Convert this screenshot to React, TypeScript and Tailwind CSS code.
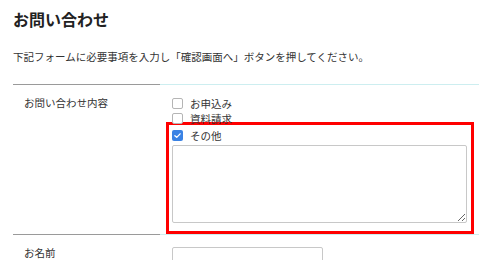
import React from 'react';

function Box({ checked }: { checked?: boolean }) {
  if (checked) {
    return (
      <span className="flex h-[11px] w-[11px] items-center justify-center rounded-[2px] bg-[#3a82e4]">
        <svg viewBox="0 0 12 12" className="h-[9px] w-[9px]">
          <path d="M2.5 6.2 5 8.5 9.5 3.8" fill="none" stroke="#fff" strokeWidth="1.8" strokeLinecap="round" strokeLinejoin="round" />
        </svg>
      </span>
    );
  }
  return <span className="block h-[11px] w-[11px] rounded-[2px] border border-[#b5b5b5] bg-white" />;
}

function Item({ label, checked }: { label: string; checked?: boolean }) {
  return (
    <label className="flex h-[15px] items-center gap-[7px] text-[10.5px] leading-[15px] text-[#333]">
      <Box checked={checked} />
      <span>{label}</span>
    </label>
  );
}

export default function App() {
  return (
    <div className="h-[260px] w-[492px] overflow-hidden bg-white px-[13px] font-['Noto_Sans_CJK_JP','Noto_Sans',sans-serif] text-[#333]">
      <h1 className="pt-[8px] text-[16px] font-bold leading-[22px] text-[#222]">お問い合わせ</h1>
      <p className="mt-[19px] text-[10.5px] leading-[16px]">
        下記フォームに必要事項を入力し「確認画面へ」ボタンを押してください。
      </p>

      <div className="mt-[19px] w-[466px]">
        <div className="flex">
          <div className="w-[147px] border-t border-[#9a9a9a] pl-[11px] pt-[10px] text-[10.5px] leading-[16px]">
            お問い合わせ内容
          </div>
          <div className="flex-1 border-t border-[#cdeef0] pl-[12px] pt-[11px]">
            <Item label="お申込み" />
            <Item label="資料請求" />
            <div className="-ml-[6px] -mt-[4px] w-[308px] border-[3px] border-[#ff0000] pb-[8px] pl-[3px] pt-[3px]">
              <Item label="その他" checked />
              <textarea
                className="mt-[2px] block h-[78px] w-[295px] rounded-[2px] border border-[#c8c8c8] bg-white outline-none"
                defaultValue=""
              />
            </div>
          </div>
        </div>

        <div className="flex">
          <div className="w-[147px] border-t border-[#9a9a9a] pl-[11px] pt-[10px] text-[10.5px] leading-[16px]">
            お名前
          </div>
          <div className="flex-1 border-t border-[#cdeef0] pl-[12px] pt-[12px]">
            <input className="block h-[22px] w-[151px] rounded-[2px] border border-[#c8c8c8] bg-white outline-none" />
          </div>
        </div>
      </div>
    </div>
  );
}
